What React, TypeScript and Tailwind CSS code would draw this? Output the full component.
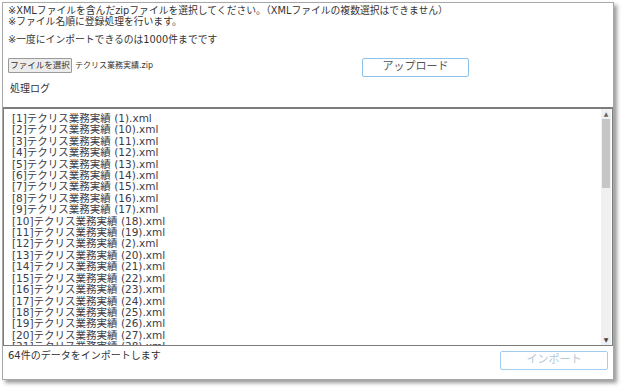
import React from "react";

const nums = Array.from({ length: 64 }, (_, i) => String(i + 1)).sort();
const lines = nums.slice(0, 21).map((n, i) => `[${i + 1}]テクリス業務実績 (${n}).xml`);

export default function App() {
  return (
    <div
      className="w-[623px] h-[390px] bg-white pl-[2px] pt-[2px] text-[#333]"
      style={{ fontFamily: "'DejaVu Sans','Noto Sans CJK JP',sans-serif" }}
    >
      <div className="w-[612px] h-[378px] border border-[#a8a8a8] bg-white shadow-[3px_3px_4px_rgba(0,0,0,0.4)] flex flex-col">
        <div className="pl-[5px] pt-[2px] text-[9.8px] leading-[11px]">
          <div>※XMLファイルを含んだzipファイルを選択してください。（XMLファイルの複数選択はできません）</div>
          <div>※ファイル名順に登録処理を行います。</div>
          <div className="mt-[7px]">※一度にインポートできるのは1000件までです</div>
        </div>
        <div className="mt-[13px] h-[19px] flex items-start pl-[5px]">
          <div className="w-[354px] flex items-start">
            <div className="h-[15px] w-[64px] border border-[#9a9a9a] bg-[#ececec] text-[8.5px] leading-[13px] rounded-[1px] flex justify-center">
              ファイルを選択
            </div>
            <div className="ml-[3px] text-[8px] leading-[15px]">テクリス業務実績.zip</div>
          </div>
          <div className="w-[107px] h-[19px] border-[1.5px] border-[#8ec2e8] rounded-[2px] flex items-center justify-center text-[11px] text-[#555]">
            アップロード
          </div>
        </div>
        <div className="mt-[6px] pl-[7px] text-[10px] leading-[11px]">処理ログ</div>
        <div className="mt-[13px] h-[239px] border border-[#7c7c7c] border-t-2 flex">
          <div className="flex-1 overflow-hidden pl-[8px] pt-[4px] text-[10.5px] leading-[11.4px] text-[#3c3c46]">
            {lines.map((l) => (
              <div key={l} className="whitespace-nowrap">{l}</div>
            ))}
          </div>
          <div className="w-[10px] mr-[1px] bg-[#f0f0f0] flex flex-col items-center">
            <div className="h-[10px] flex items-center justify-center text-[6px] text-[#666] leading-none">▲</div>
            <div className="w-[8px] h-[69px] bg-[#c6c6c6]" />
            <div className="flex-1" />
            <div className="h-[10px] flex items-center justify-center text-[6px] text-[#444] leading-none">▼</div>
          </div>
        </div>
        <div className="flex items-start pl-[5px] pr-[5px] flex-1">
          <div className="mt-[4px] text-[10px] leading-[11px]">64件のデータをインポートします</div>
          <div className="ml-auto mt-[5px] w-[108px] h-[19px] border-[1.5px] border-[#a2cdf0] rounded-[2px] flex items-center justify-center text-[11px] text-[#b4c8da]">
            インポート
          </div>
        </div>
      </div>
    </div>
  );
}
